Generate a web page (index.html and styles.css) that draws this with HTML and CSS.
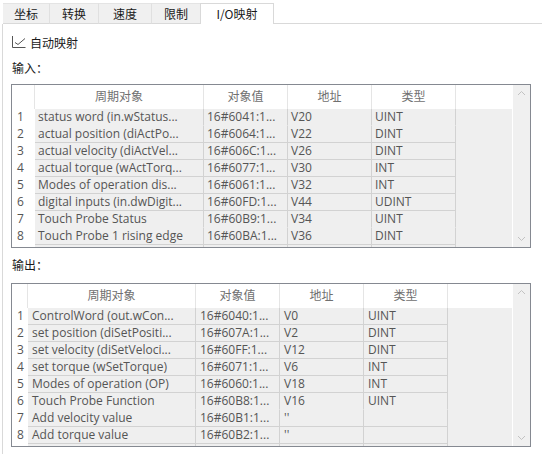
FILE: index.html
```html
<!DOCTYPE html>
<html lang="zh-CN">
<head>
<meta charset="utf-8">
<title>I/O映射</title>
<link rel="stylesheet" href="styles.css">
</head>
<body>
<div class="tabs">
  <div class="tab tw1">坐标</div>
  <div class="tab tw2">转换</div>
  <div class="tab tw3">速度</div>
  <div class="tab tw4">限制</div>
  <div class="tab active">I/O映射</div>
  <div class="tab-fill"></div>
</div>
<div class="panel">
  <div class="check">
    <svg class="cb" width="14" height="12" viewBox="0 0 14 12"><path d="M0.5 0V11.5H13.5" fill="none" stroke="#555" stroke-width="1"/><path d="M3 6.5L6 8.5L13 2.5" fill="none" stroke="#555" stroke-width="1"/></svg>
    <span>自动映射</span>
  </div>
  <div class="label">输入：</div>
  <div class="table">
    <div class="grid t1">
      <div class="h"></div><div class="h">周期对象</div><div class="h">对象值</div><div class="h">地址</div><div class="h">类型</div><div class="h last"></div>
      <div class="row nl"><div class="n">1</div><div class="c">status word (in.wStatus...</div><div class="c">16#6041:1...</div><div class="c">V20</div><div class="c">UINT</div><div class="e"></div></div>
      <div class="row"><div class="n">2</div><div class="c">actual position (diActPo...</div><div class="c">16#6064:1...</div><div class="c">V22</div><div class="c">DINT</div><div class="e"></div></div>
      <div class="row"><div class="n">3</div><div class="c">actual velocity (diActVel...</div><div class="c">16#606C:1...</div><div class="c">V26</div><div class="c">DINT</div><div class="e"></div></div>
      <div class="row"><div class="n">4</div><div class="c">actual torque (wActTorq...</div><div class="c">16#6077:1...</div><div class="c">V30</div><div class="c">INT</div><div class="e"></div></div>
      <div class="row"><div class="n">5</div><div class="c">Modes of operation dis...</div><div class="c">16#6061:1...</div><div class="c">V32</div><div class="c">INT</div><div class="e"></div></div>
      <div class="row"><div class="n">6</div><div class="c">digital inputs (in.dwDigit...</div><div class="c">16#60FD:1...</div><div class="c">V44</div><div class="c">UDINT</div><div class="e"></div></div>
      <div class="row nl"><div class="n">7</div><div class="c">Touch Probe Status</div><div class="c">16#60B9:1...</div><div class="c">V34</div><div class="c">UINT</div><div class="e"></div></div>
      <div class="row"><div class="n">8</div><div class="c">Touch Probe 1 rising edge</div><div class="c">16#60BA:1...</div><div class="c">V36</div><div class="c">DINT</div><div class="e"></div></div>
      <div class="row"><div class="n"></div><div class="c"></div><div class="c"></div><div class="c"></div><div class="c"></div><div class="e"></div></div>
    </div>
    <div class="scroll">
      <svg viewBox="0 0 17 17"><polyline points="5,10 8.5,6.5 12,10" fill="none" stroke="#c2c2c2" stroke-width="1"/></svg>
      <svg viewBox="0 0 17 17"><polyline points="5,7 8.5,10.5 12,7" fill="none" stroke="#c2c2c2" stroke-width="1"/></svg>
    </div>
  </div>
  <div class="label out">输出：</div>
  <div class="table">
    <div class="grid t2">
      <div class="h"></div><div class="h">周期对象</div><div class="h">对象值</div><div class="h">地址</div><div class="h">类型</div><div class="h last"></div>
      <div class="row"><div class="n">1</div><div class="c">ControlWord (out.wCon...</div><div class="c">16#6040:1...</div><div class="c">V0</div><div class="c">UINT</div><div class="e"></div></div>
      <div class="row"><div class="n">2</div><div class="c">set position (diSetPositi...</div><div class="c">16#607A:1...</div><div class="c">V2</div><div class="c">DINT</div><div class="e"></div></div>
      <div class="row"><div class="n">3</div><div class="c">set velocity (diSetVeloci...</div><div class="c">16#60FF:1...</div><div class="c">V12</div><div class="c">DINT</div><div class="e"></div></div>
      <div class="row"><div class="n">4</div><div class="c">set torque (wSetTorque)</div><div class="c">16#6071:1...</div><div class="c">V6</div><div class="c">INT</div><div class="e"></div></div>
      <div class="row"><div class="n">5</div><div class="c">Modes of operation (OP)</div><div class="c">16#6060:1...</div><div class="c">V18</div><div class="c">INT</div><div class="e"></div></div>
      <div class="row nl"><div class="n">6</div><div class="c">Touch Probe Function</div><div class="c">16#60B8:1...</div><div class="c">V16</div><div class="c">UINT</div><div class="e"></div></div>
      <div class="row"><div class="n">7</div><div class="c">Add velocity value</div><div class="c">16#60B1:1...</div><div class="c">''</div><div class="c"></div><div class="e"></div></div>
      <div class="row"><div class="n">8</div><div class="c">Add torque value</div><div class="c">16#60B2:1...</div><div class="c">''</div><div class="c"></div><div class="e"></div></div>
      <div class="row"><div class="n"></div><div class="c"></div><div class="c"></div><div class="c"></div><div class="c"></div><div class="e"></div></div>
    </div>
    <div class="scroll">
      <svg viewBox="0 0 17 17"><polyline points="5,10 8.5,6.5 12,10" fill="none" stroke="#c2c2c2" stroke-width="1"/></svg>
      <svg viewBox="0 0 17 17"><polyline points="5,7 8.5,10.5 12,7" fill="none" stroke="#c2c2c2" stroke-width="1"/></svg>
    </div>
  </div>
</div>
</body>
</html>
```
FILE: styles.css
```css
* { box-sizing: border-box; }
html, body { margin: 0; padding: 0; }
body {
  width: 542px;
  height: 454px;
  overflow: hidden;
  background: #fff;
  font-family: "Noto Sans CJK SC", "Noto Sans", sans-serif;
  font-size: 12px;
  color: #1a1a1a;
}

/* tabs */
.tabs {
  display: flex;
  align-items: flex-end;
  height: 24px;
  padding-left: 3px;
}
.tab {
  height: 21px;
  line-height: 19px;
  text-align: center;
  background: #f0f0f0;
  border-top: 1px solid #e4e4e4;
  border-bottom: 1px solid #d9d9d9;
  border-right: 1px solid #e0e0e0;
  color: #1a1a1a;
}
.tw1 { width: 47px; }
.tw2 { width: 49px; }
.tw3 { width: 53px; }
.tw4 { width: 48px; border-right: none; }
.tab.active {
  width: 74px;
  background: #fff;
  border: 1px solid #d9d9d9;
  border-bottom: none;
  line-height: 20px;
}
.tab-fill {
  flex: 1;
  height: 1px;
  border-bottom: 1px solid #d9d9d9;
}

/* panel */
.panel {
  margin-left: 2px;
  border-left: 1px solid #d9d9d9;
  height: 430px;
  padding: 10px 0 0 8px;
}
.check {
  display: flex;
  align-items: center;
  gap: 4px;
  height: 16px;
  margin-left: 1px;
}
.cb { display: block; }
.label {
  height: 16px;
  line-height: 16px;
  margin-top: 10px;
  padding-left: 1px;
}
.label.out { margin-top: 9px; }

/* table */
.table {
  display: flex;
  width: 520px;
  height: 164px;
  margin-top: 8px;
  border: 1px solid #858991;
  background: #fff;
}
.label.out + .table { margin-top: 10px; }
.grid {
  width: 500px;
  height: 162px;
  overflow: hidden;
  display: grid;
  grid-template-rows: 24px;
  grid-auto-rows: 17px;
  align-content: start;
  font-family: "Open Sans", "Noto Sans CJK SC", sans-serif;
  font-size: 12px;
}
.t1 { grid-template-columns: 23px 169px 84px 84px 84px 1fr; }
.t2 { grid-template-columns: 16px 168px 84px 84px 84px 1fr; }
.row { display: contents; }

.h {
  background: #fff;
  border-right: 1px solid #e5e5e5;
  text-align: center;
  line-height: 22px;
  color: #707070;
  font-family: "Noto Sans CJK SC", sans-serif;
}
.h.last { border-right: none; }
.n {
  background: #fff;
  padding-left: 5px;
  line-height: 16px;
  color: #555;
}
.c {
  background: #efefef;
  border-right: 1px solid #d2d2d2;
  border-bottom: 1px solid #d2d2d2;
  padding-left: 3px;
  line-height: 16px;
  white-space: nowrap;
  overflow: hidden;
  color: #555;
}
.t2 .c { padding-left: 4px; }
.row.nl .c { border-bottom-color: transparent; }
.e { background: #efefef; }

.scroll {
  width: 17px;
  margin-left: 1px;
  background: #f0f0f0;
  display: flex;
  flex-direction: column;
  justify-content: space-between;
}
.scroll svg { display: block; width: 17px; height: 17px; }
```
